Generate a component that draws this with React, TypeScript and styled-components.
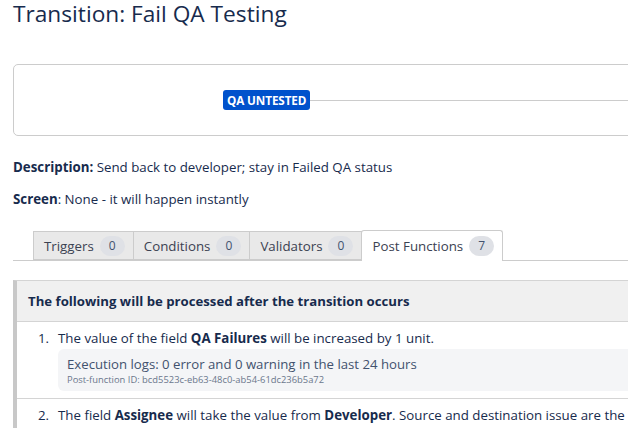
import React from 'react';
import styled, { createGlobalStyle } from 'styled-components';

const GlobalStyle = createGlobalStyle`
  html, body {
    margin: 0;
    padding: 0;
    background: #fff;
    overflow: hidden;
  }
  body {
    font-family: "Open Sans", "Noto Sans", sans-serif;
    color: #172b4d;
  }
`;

type Tab = { name: string; count: number; active?: boolean };

const tabs: Tab[] = [
  { name: 'Triggers', count: 0 },
  { name: 'Conditions', count: 0 },
  { name: 'Validators', count: 0 },
  { name: 'Post Functions', count: 7, active: true },
];

const App = () => {
  return (
    <>
      <GlobalStyle />
      <S.Page>
        <S.Title>Transition: Fail QA Testing</S.Title>

        <S.Diagram>
          <S.Lozenge>QA UNTESTED</S.Lozenge>
          <S.Line />
        </S.Diagram>

        <S.Description>
          <b>Description:</b> Send back to developer; stay in Failed QA status
        </S.Description>
        <S.ScreenInfo>
          <b>Screen</b>: None - it will happen instantly
        </S.ScreenInfo>

        <S.TabBar>
          {tabs.map((tab) => (
            <S.Tab key={tab.name} $active={tab.active}>
              {tab.name}
              <S.Badge>{tab.count}</S.Badge>
            </S.Tab>
          ))}
        </S.TabBar>

        <S.Panel>
          <S.PanelHeader>The following will be processed after the transition occurs</S.PanelHeader>
          <S.List>
            <S.Item>
              <S.ItemNum>1.</S.ItemNum>
              <S.ItemBody>
                <S.ItemText>
                  The value of the field <b>QA Failures</b> will be increased by 1 unit.
                </S.ItemText>
                <S.LogBox>
                  <S.LogText>Execution logs: 0 error and 0 warning in the last 24 hours</S.LogText>
                  <S.LogId>Post-function ID: bcd5523c-eb63-48c0-ab54-61dc236b5a72</S.LogId>
                </S.LogBox>
              </S.ItemBody>
            </S.Item>
            <S.Item>
              <S.ItemNum>2.</S.ItemNum>
              <S.ItemBody>
                <S.ItemText>
                  The field <b>Assignee</b> will take the value from <b>Developer</b>. Source and destination issue are the same issue.
                </S.ItemText>
              </S.ItemBody>
            </S.Item>
          </S.List>
        </S.Panel>
      </S.Page>
    </>
  );
};

export default App;

const S: any = {};

S.Page = styled.div`
  width: 700px;
  padding: 0 0 0 13px;
  font-size: 13.3px;
`;

S.Title = styled.h1`
  margin: 0;
  height: 36px;
  font-size: 22.7px;
  font-weight: 400;
  line-height: 28px;
  color: #172b4d;
`;

S.Diagram = styled.div`
  margin-top: 28px;
  height: 70px;
  border: 1px solid #cccccc;
  border-radius: 5px;
  display: flex;
  align-items: center;
  padding-left: 209px;
`;

S.Lozenge = styled.div`
  background: #0052cc;
  color: #fff;
  font-size: 11.7px;
  font-weight: 700;
  line-height: 20px;
  height: 20px;
  padding: 0 4px;
  border-radius: 3px;
  letter-spacing: -0.1px;
`;

S.Line = styled.div`
  flex: 1;
  height: 1px;
  background: #cccccc;
`;

S.Description = styled.div`
  margin-top: 24px;
  line-height: 14px;
  font-size: 13.3px;
  color: #172b4d;
  b {
    font-weight: 700;
  }
`;

S.ScreenInfo = styled(S.Description)`
  margin-top: 18px;
`;

S.TabBar = styled.div`
  margin-top: 24px;
  padding-left: 20px;
  height: 30px;
  border-bottom: 1px solid #cccccc;
  display: flex;
  align-items: flex-end;
`;

S.Tab = styled.div<{ $active?: boolean }>`
  height: ${(p: any) => (p.$active ? '31px' : '29px')};
  margin-bottom: ${(p: any) => (p.$active ? '-1px' : '0')};
  box-sizing: border-box;
  display: flex;
  align-items: center;
  gap: 6px;
  padding: 0 8px 0 10px;
  border: 1px solid #cccccc;
  border-bottom: ${(p: any) => (p.$active ? 'none' : '1px solid #cccccc')};
  margin-left: -1px;
  border-radius: ${(p: any) => (p.$active ? '3px 3px 0 0' : '0')};
  background: ${(p: any) => (p.$active ? '#ffffff' : '#e9e9e9')};
  font-size: 13.3px;
  color: #3b4252;
  &:first-child {
    margin-left: 0;
  }
`;

S.Badge = styled.span`
  display: inline-block;
  min-width: 25px;
  height: 20px;
  line-height: 20px;
  text-align: center;
  border-radius: 10px;
  background: #dfe1e6;
  color: #42526e;
  font-size: 12px;
`;

S.Panel = styled.div`
  margin-top: 19px;
  border-left: 4px solid #c8c8c8;
  border-top: 1px solid #d4d4d4;
`;

S.PanelHeader = styled.div`
  background: #f0f0f0;
  height: 40px;
  line-height: 40px;
  padding-left: 11px;
  font-size: 13.2px;
  font-weight: 700;
  color: #172b4d;
  border-bottom: 1px solid #d4d4d4;
`;

S.List = styled.div``;

S.Item = styled.div`
  display: flex;
  padding: 7px 0 7px 21px;
  border-bottom: 1px solid #d4d4d4;
`;

S.ItemNum = styled.div`
  width: 20px;
  font-size: 13.3px;
  line-height: 18px;
  color: #172b4d;
`;

S.ItemBody = styled.div`
  flex: 1;
  min-width: 0;
`;

S.ItemText = styled.div`
  font-size: 13.3px;
  line-height: 18px;
  color: #172b4d;
  white-space: nowrap;
  b {
    font-weight: 700;
  }
`;

S.LogBox = styled.div`
  margin-top: 2px;
  background: #f4f5f7;
  border-radius: 6px;
  padding: 6px 9px 4px;
`;

S.LogText = styled.div`
  font-size: 13.2px;
  line-height: 18px;
  color: #42526e;
`;

S.LogId = styled.div`
  font-size: 9.4px;
  line-height: 14px;
  color: #6b778c;
`;
